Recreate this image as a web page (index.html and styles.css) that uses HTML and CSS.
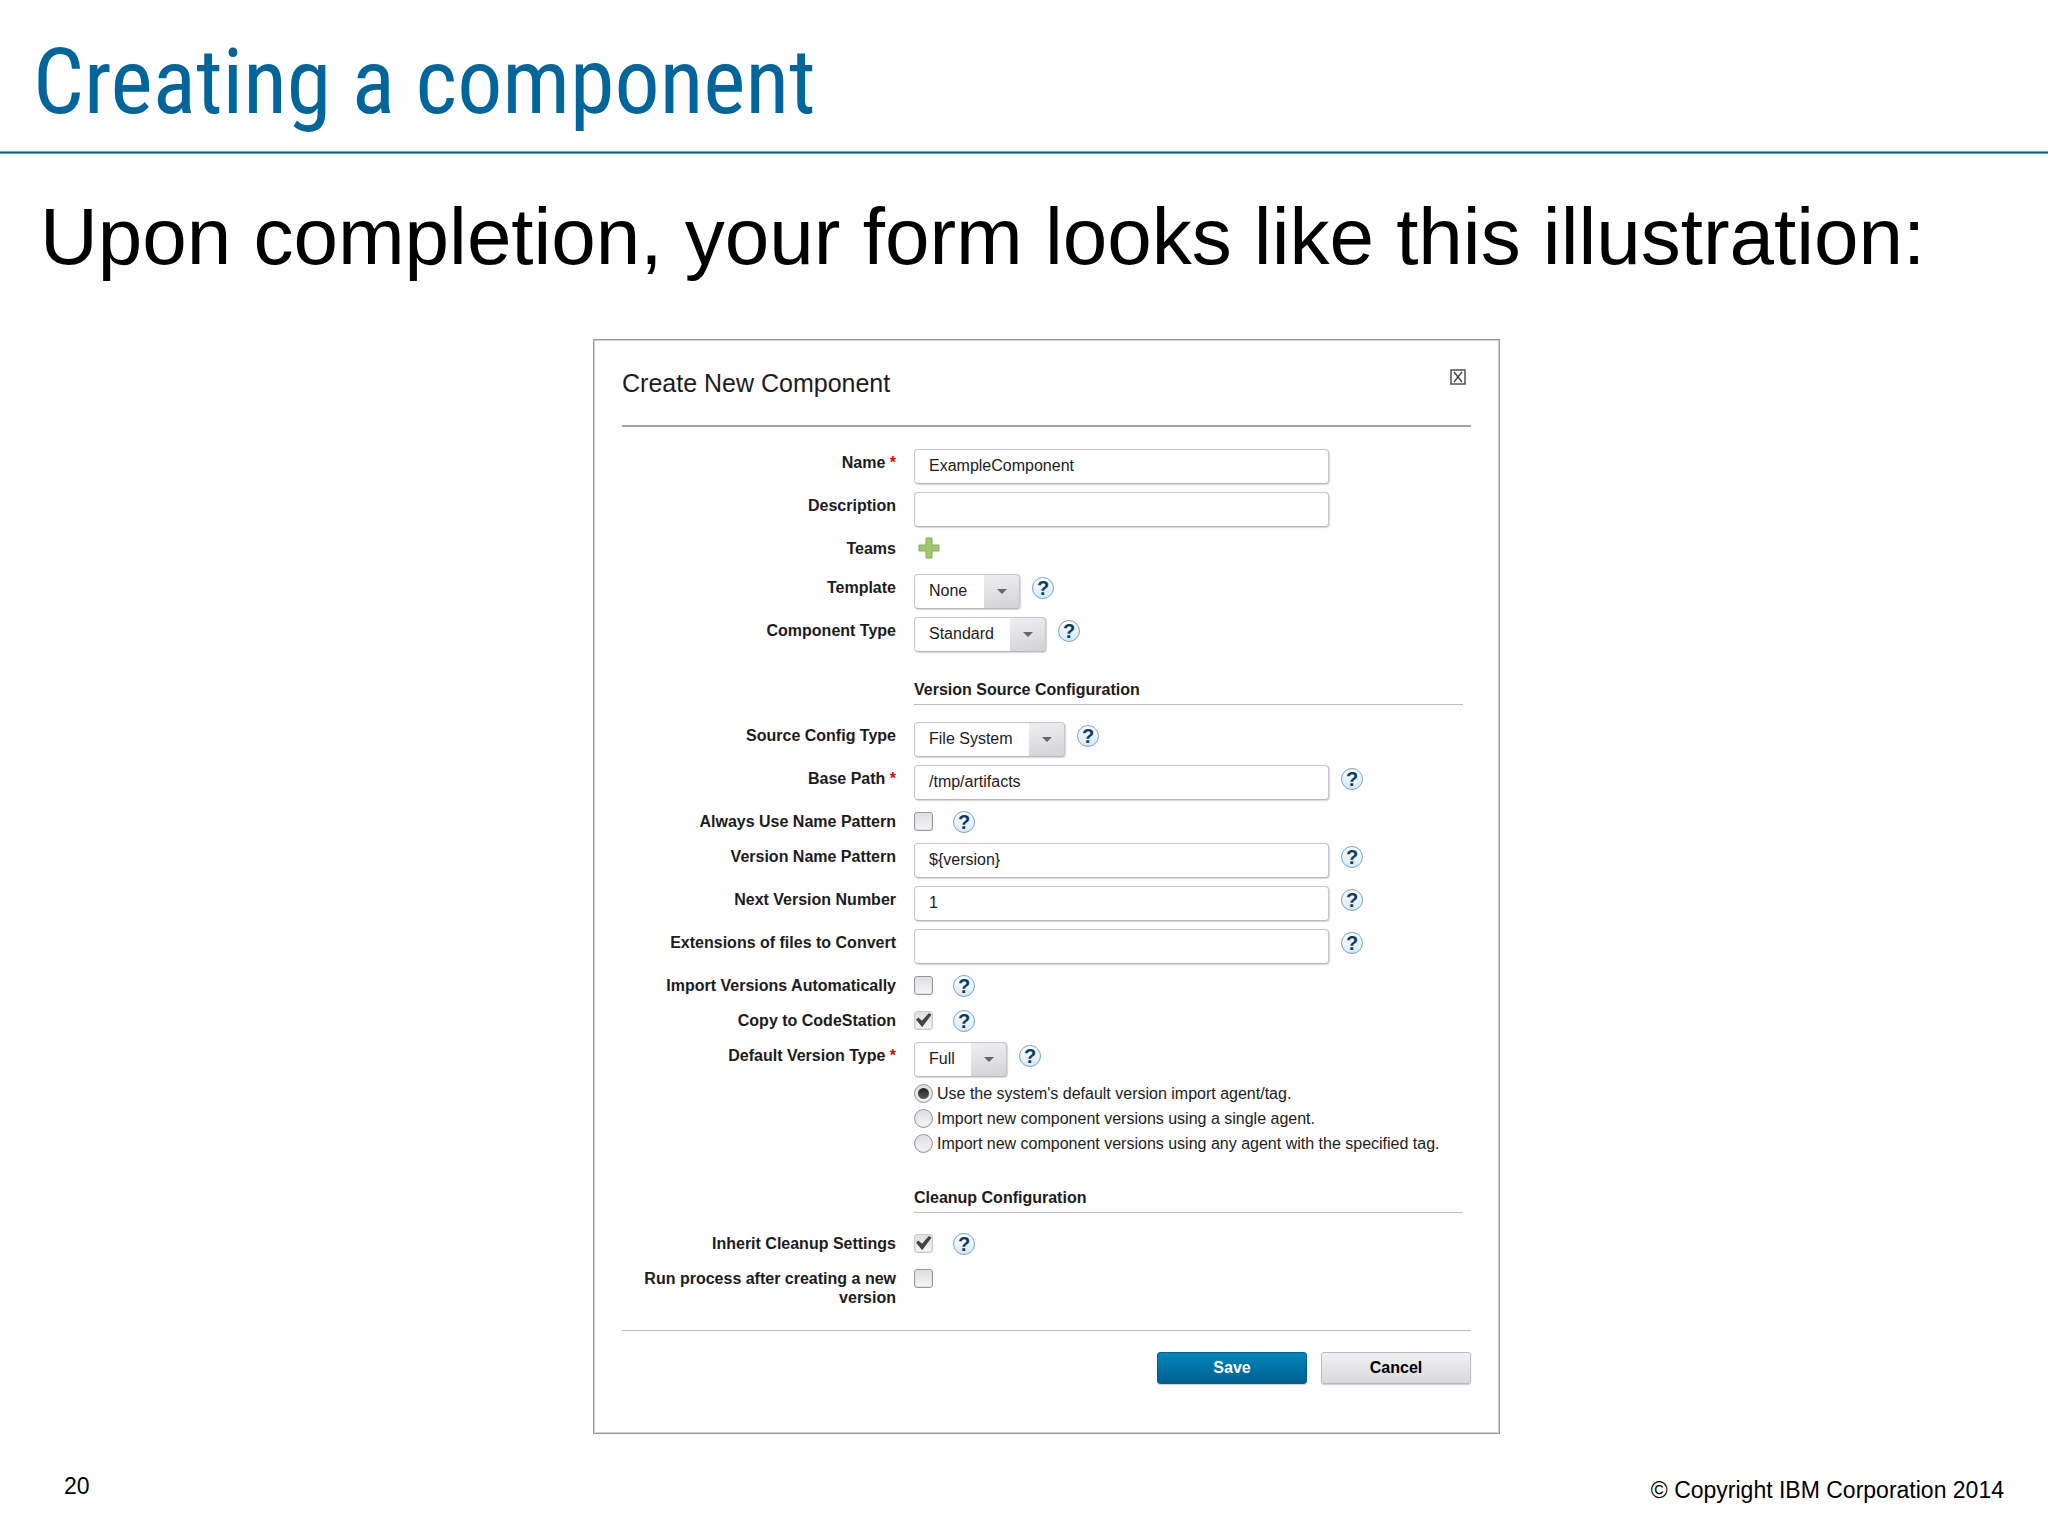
FILE: index.html
```html
<!DOCTYPE html>
<html lang="en">
<head>
    <meta charset="UTF-8">
    <meta name="viewport" content="width=device-width, initial-scale=1.0">
    <title>Creating a component</title>
    <link rel="stylesheet" href="styles.css">
</head>
<body>
    <header class="slide-header">
        <h1>Creating a component</h1>
    </header>
    <main>
        <p class="intro">Upon completion, your form looks like this illustration:</p>
        <div class="stage">
            <form class="dialog">
                <div class="dialog-header">
                    <h2>Create New Component</h2>
                    <button type="button" class="close" aria-label="Close">
                        <svg viewBox="0 0 16 16" width="16" height="16"><rect x="1" y="1" width="14" height="14" /><path d="M4 3L12 13M12 3L4 13" /></svg>
                    </button>
                </div>

                <div class="fields">
                    <div class="row">
                        <label for="name">Name <span class="required">*</span></label>
                        <div class="control"><input type="text" id="name" value="ExampleComponent"></div>
                    </div>
                    <div class="row">
                        <label for="description">Description</label>
                        <div class="control"><input type="text" id="description"></div>
                    </div>
                    <div class="row teams">
                        <label for="teams">Teams</label>
                        <div class="control">
                            <button type="button" class="add" id="teams">
                                <svg viewBox="0 0 22 22" width="22" height="22"><path d="M8 1H14V8H21V14H14V21H8V14H1V8H8Z" /></svg>
                            </button>
                        </div>
                    </div>
                    <div class="row">
                        <label for="template">Template</label>
                        <div class="control">
                            <span class="select"><select id="template"><option>None</option></select></span>
                            <button type="button" class="help">?</button>
                        </div>
                    </div>
                    <div class="row">
                        <label for="type">Component Type</label>
                        <div class="control">
                            <span class="select"><select id="type"><option>Standard</option></select></span>
                            <button type="button" class="help">?</button>
                        </div>
                    </div>

                    <h3>Version Source Configuration</h3>

                    <div class="row">
                        <label for="source">Source Config Type</label>
                        <div class="control">
                            <span class="select"><select id="source"><option>File System</option></select></span>
                            <button type="button" class="help">?</button>
                        </div>
                    </div>
                    <div class="row">
                        <label for="path">Base Path <span class="required">*</span></label>
                        <div class="control">
                            <input type="text" id="path" value="/tmp/artifacts">
                            <button type="button" class="help">?</button>
                        </div>
                    </div>
                    <div class="row check">
                        <label for="always">Always Use Name Pattern</label>
                        <div class="control">
                            <input type="checkbox" id="always">
                            <button type="button" class="help">?</button>
                        </div>
                    </div>
                    <div class="row">
                        <label for="pattern">Version Name Pattern</label>
                        <div class="control">
                            <input type="text" id="pattern" value="${version}">
                            <button type="button" class="help">?</button>
                        </div>
                    </div>
                    <div class="row">
                        <label for="next">Next Version Number</label>
                        <div class="control">
                            <input type="text" id="next" value="1">
                            <button type="button" class="help">?</button>
                        </div>
                    </div>
                    <div class="row">
                        <label for="extensions">Extensions of files to Convert</label>
                        <div class="control">
                            <input type="text" id="extensions">
                            <button type="button" class="help">?</button>
                        </div>
                    </div>
                    <div class="row check">
                        <label for="import">Import Versions Automatically</label>
                        <div class="control">
                            <input type="checkbox" id="import">
                            <button type="button" class="help">?</button>
                        </div>
                    </div>
                    <div class="row check">
                        <label for="copy">Copy to CodeStation</label>
                        <div class="control">
                            <input type="checkbox" id="copy" checked>
                            <button type="button" class="help">?</button>
                        </div>
                    </div>
                    <div class="row">
                        <label for="default">Default Version Type <span class="required">*</span></label>
                        <div class="control">
                            <span class="select"><select id="default"><option>Full</option></select></span>
                            <button type="button" class="help">?</button>
                        </div>
                    </div>
                    <div class="radios">
                        <label><input type="radio" name="agent" checked>Use the system's default version import agent/tag.</label>
                        <label><input type="radio" name="agent">Import new component versions using a single agent.</label>
                        <label><input type="radio" name="agent">Import new component versions using any agent with the specified tag.</label>
                    </div>

                    <h3>Cleanup Configuration</h3>

                    <div class="row check">
                        <label for="inherit">Inherit Cleanup Settings</label>
                        <div class="control">
                            <input type="checkbox" id="inherit" checked>
                            <button type="button" class="help">?</button>
                        </div>
                    </div>
                    <div class="row check">
                        <label for="run">Run process after creating a new version</label>
                        <div class="control"><input type="checkbox" id="run"></div>
                    </div>
                </div>

                <div class="actions">
                    <button type="button" class="button primary">Save</button>
                    <button type="button" class="button">Cancel</button>
                </div>
            </form>
        </div>
    </main>
    <footer class="slide-footer">
        <span>20</span>
        <span class="copyright">© Copyright IBM Corporation 2014</span>
    </footer>
</body>
</html>
```
FILE: styles.css
```css
* {
    box-sizing: border-box;
}
body {
    margin: 0;
    background: #fefefe;
    color: #000;
    font-family: "Liberation Sans", Arial, sans-serif;
}
h1, h2, h3, p {
    margin: 0;
    font-weight: normal;
}
input, select, button {
    margin: 0;
    font: inherit;
    color: inherit;
}
button {
    padding: 0;
    border: 0;
    background: none;
    cursor: pointer;
}

/* slide */
.slide-header {
    padding: 28px 33px 13px;
}
.slide-header::after {
    content: "";
    display: block;
    height: 3px;
    margin: 13px -33px -13px;
    background: linear-gradient(#6ba8c6 1px, #075a8b 1px, #075a8b 2px, #6ba8c6 2px);
}
h1 {
    font-family: "Liberation Sans Narrow", "Arial Narrow", "Roboto Condensed", "Liberation Sans", sans-serif;
    font-size: 90px;
    line-height: 110px;
    color: #00659b;
}
.intro {
    padding: 38px 40px 57px;
    font-size: 80px;
    line-height: 90px;
}
.stage {
    display: flex;
    justify-content: center;
    padding-left: 45px;
}
.slide-footer {
    display: flex;
    justify-content: space-between;
    padding: 39px 44px 0 64px;
    font-size: 23px;
    line-height: 26px;
}
.copyright {
    padding-top: 4px;
}

/* dialog */
.dialog {
    width: 100%;
    max-width: 907px;
    padding: 28px 28px 49px;
    border: 1px solid #98989c;
    box-shadow: inset 0 0 0 1px #d4d4d6;
    font-size: 16px;
    line-height: 19px;
    color: #1c1c1c;
}
.dialog-header {
    display: flex;
    justify-content: space-between;
    align-items: flex-start;
    padding-bottom: 27px;
    border-bottom: 2px solid #a5a5a8;
}
h2 {
    font-size: 25px;
    line-height: 30px;
}
.close {
    margin: 1px 5px 0 0;
    line-height: 0;
}
.close svg {
    fill: none;
    stroke: #444;
    stroke-width: 1.4;
}
.fields {
    display: flex;
    flex-direction: column;
    gap: 8px;
    padding: 22px 0 23px;
}
.row {
    display: grid;
    grid-template-columns: 274px 1fr;
    column-gap: 18px;
    min-height: 35px;
}
.row.check {
    min-height: 27px;
}
.row.teams {
    min-height: 31px;
}
.row label {
    padding-top: 4px;
    text-align: right;
    font-weight: bold;
}
.required {
    color: #e80000;
}
.control {
    display: flex;
    align-items: flex-start;
    gap: 12px;
}
h3 {
    margin: 20px 8px 9px 292px;
    padding-bottom: 5px;
    border-bottom: 1px solid #bdbcc0;
    font-size: 16px;
    font-weight: bold;
}

input[type="text"], select {
    height: 35px;
    padding: 0 14px 2px;
    border: 1px solid #c6c5ca;
    border-bottom-color: #b9b8bd;
    border-radius: 4px;
    background: #fff;
    box-shadow: 1px 1px 1px #d9d8dc;
}
input[type="text"] {
    width: 415px;
}
.select {
    position: relative;
}
.select::after {
    content: "";
    position: absolute;
    top: 15px;
    right: 13px;
    border: 5px solid transparent;
    border-top-color: #666;
    border-bottom: 0;
    pointer-events: none;
}
select {
    display: block;
    appearance: none;
    padding-right: 51px;
    background: linear-gradient(170deg, #efeef0, #d3d2d6) right / 35px 100% no-repeat #fff;
}
.help {
    width: 22px;
    height: 22px;
    margin-top: 3px;
    border: 1px solid #7ba3bf;
    border-radius: 50%;
    background: linear-gradient(#fff, #d3ebf9);
    font-size: 20px;
    font-weight: bold;
    line-height: 20px;
    color: #0c3c62;
}
.add {
    margin: 2px 0 0 4px;
    line-height: 0;
}
.add svg {
    fill: #9fc76f;
    stroke: #86ad5c;
}

input[type="checkbox"], input[type="radio"] {
    appearance: none;
    flex: none;
    width: 19px;
    height: 19px;
    border: 1px solid #97969a;
    background: linear-gradient(#dddce0, #f6f6f7);
    box-shadow: inset 0 0 0 1px #e2e2e4;
}
input[type="checkbox"] {
    margin: 4px 8px 0 0;
    border-radius: 3px;
}
input[type="checkbox"]:checked {
    border-color: #cbcacd;
}
input[type="checkbox"]:checked::before {
    content: "";
    display: block;
    height: 17px;
    background: #444;
    clip-path: polygon(6% 44%, 20% 32%, 41% 52%, 82% 6%, 97% 16%, 42% 90%);
}
input[type="radio"] {
    border-radius: 50%;
}
input[type="radio"]:checked::before {
    content: "";
    display: block;
    width: 11px;
    height: 11px;
    margin: 3px;
    border-radius: 50%;
    background: linear-gradient(#222, #5a5a5a);
}
.radios {
    display: flex;
    flex-direction: column;
    gap: 6px;
    margin: -1px 0 7px 292px;
}
.radios label {
    display: flex;
    gap: 4px;
}

.actions {
    display: flex;
    justify-content: flex-end;
    gap: 14px;
    padding-top: 21px;
    border-top: 1px solid #bebec1;
}
.button {
    width: 150px;
    height: 32px;
    padding-bottom: 2px;
    border: 1px solid #bbbabe;
    border-radius: 3px;
    background: linear-gradient(#f0eff1, #d9d8dc);
    box-shadow: 0 1px 1px #d0d0d3;
    font-weight: bold;
    color: #000;
}
.primary {
    border-color: #00608f;
    background: linear-gradient(#0086bd, #00608f);
    color: #fff;
}
```
